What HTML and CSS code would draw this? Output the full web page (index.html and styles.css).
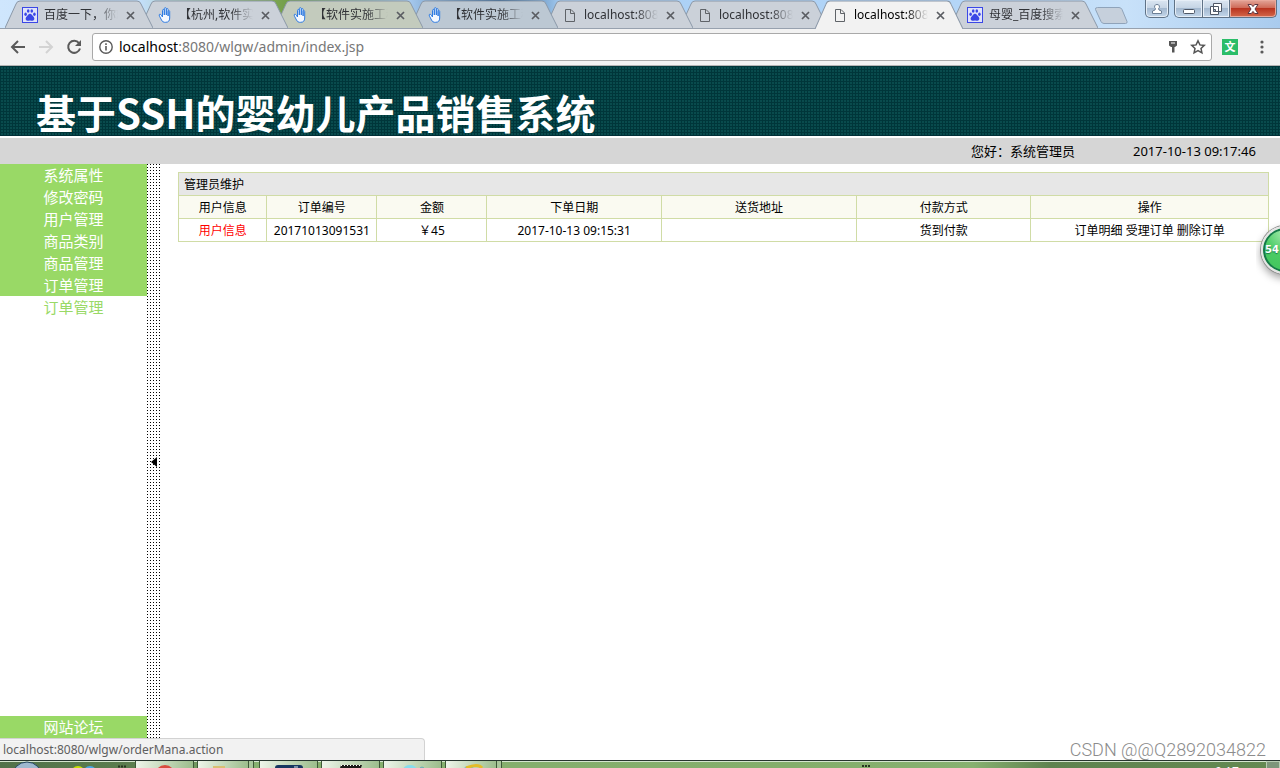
FILE: index.html
```html
<!DOCTYPE html>
<html lang="zh-CN">
<head>
<meta charset="utf-8">
<title>基于SSH的婴幼儿产品销售系统</title>
<link rel="stylesheet" href="styles.css">
</head>
<body>
<svg class="defs" aria-hidden="true">
  <symbol id="tab-shape" viewBox="0 0 148 28" preserveAspectRatio="none">
    <path d="M0 28 L11 4 Q12 1 15 1 H132 Q135 1 136 4 L148 28"/>
  </symbol>
  <symbol id="paw" viewBox="0 0 16 16">
    <rect x=".5" y=".5" width="15" height="15" fill="#dfe3fa" stroke="#3b48e6"/>
    <g fill="#3b48e6"><ellipse cx="3.6" cy="7.2" rx="1.3" ry="1.700"/><ellipse cx="6.2" cy="4" rx="1.3" ry="1.800"/><ellipse cx="9.8" cy="4" rx="1.3" ry="1.800"/><ellipse cx="12.4" cy="7.2" rx="1.3" ry="1.700"/><path d="M8 6.800c1.700 0 2 1.600 3.300 2.800 1.500 1.300 1.400 3.900-.6 4.200-1 .1-1.700-.3-2.700-.3s-1.700.4-2.700.3c-2-.3-2.100-2.900-.6-4.200C6 8.400 6.300 6.800 8 6.800z"/></g>
  </symbol>
  <symbol id="hand" viewBox="0 0 16 16">
    <path d="M5.500 9V3.500q0-1 .9-1t.9 1V8 1.700q0-1 1-1t1 1V8 2.500q0-1 .9-1t.9 1V9 4.500q0-.9.8-.9t.8.900V11q0 4.300-4 4.300H7.500Q5.500 15.300 4.500 13L2.500 9.200q-1-1.700.3-2 .8-.1 1.500 1L5.500 10z" fill="#f4f8ff" stroke="#2f7be0"/>
  </symbol>
  <symbol id="page" viewBox="0 0 16 16">
    <path d="M3.500 2.500h5.500l3.500 3.500v8.500h-9zM8.500 2.500v4h4" fill="none" stroke="currentColor"/>
  </symbol>
  <symbol id="cross" viewBox="0 0 9 9">
    <path d="M1 1l7 7M8 1L1 8" stroke="#5a5d62" stroke-width="1.700"/>
  </symbol>
</svg>

<div class="browser-top">
  <ul class="tabs">
    <li class="tab"><svg class="shape"><use href="#tab-shape"/></svg><svg class="favicon"><use href="#paw"/></svg><span class="tab-title">百度一下，你就</span><button class="close" aria-label="关闭"><svg><use href="#cross"/></svg></button></li>
    <li class="tab"><svg class="shape"><use href="#tab-shape"/></svg><svg class="favicon"><use href="#hand"/></svg><span class="tab-title">【杭州,软件实</span><button class="close" aria-label="关闭"><svg><use href="#cross"/></svg></button></li>
    <li class="tab green"><svg class="shape"><use href="#tab-shape"/></svg><svg class="favicon"><use href="#hand"/></svg><span class="tab-title">【软件实施工程</span><button class="close" aria-label="关闭"><svg><use href="#cross"/></svg></button></li>
    <li class="tab blue"><svg class="shape"><use href="#tab-shape"/></svg><svg class="favicon"><use href="#hand"/></svg><span class="tab-title">【软件实施工程</span><button class="close" aria-label="关闭"><svg><use href="#cross"/></svg></button></li>
    <li class="tab"><svg class="shape"><use href="#tab-shape"/></svg><svg class="favicon"><use href="#page"/></svg><span class="tab-title">localhost:8080</span><button class="close" aria-label="关闭"><svg><use href="#cross"/></svg></button></li>
    <li class="tab"><svg class="shape"><use href="#tab-shape"/></svg><svg class="favicon"><use href="#page"/></svg><span class="tab-title">localhost:8080</span><button class="close" aria-label="关闭"><svg><use href="#cross"/></svg></button></li>
    <li class="tab active"><svg class="shape"><use href="#tab-shape"/></svg><svg class="favicon"><use href="#page"/></svg><span class="tab-title">localhost:8080</span><button class="close" aria-label="关闭"><svg><use href="#cross"/></svg></button></li>
    <li class="tab"><svg class="shape"><use href="#tab-shape"/></svg><svg class="favicon"><use href="#paw"/></svg><span class="tab-title">母婴_百度搜索</span><button class="close" aria-label="关闭"><svg><use href="#cross"/></svg></button></li>
  </ul>
  <button class="new-tab" aria-label="新标签页"><svg viewBox="0 0 34 17"><path d="M3.500.5H25q2 0 3 2l5 12q.5 2-1.500 2H10q-2 0-3-2L1.500 2.500q-.5-2 2-2z" fill="#c6d0dc" stroke="#8fa3ba"/></svg></button>
  <div class="window-controls">
    <button class="win user" aria-label="用户"><svg viewBox="0 0 12 12"><path d="M6 1.500a2.200 2.200 0 0 1 1.500 4L8 7l2.500 1v2.500h-9V8L4 7l.5-1.500A2.200 2.200 0 0 1 6 1.500z" fill="#fff" stroke="#6c7f96"/></svg></button>
    <div class="win-group">
      <button class="win min" aria-label="最小化"><svg viewBox="0 0 12 12"><rect x=".5" y="6.500" width="11" height="4" rx="1" fill="#fff" stroke="#4e5766"/></svg></button>
      <button class="win max" aria-label="还原"><svg viewBox="0 0 12 12"><path d="M3.500.5h8v8h-8zM.5 3.500h8v8h-8z" fill="#fff" stroke="#4e5766"/><path d="M3.500 6.500h2v2h-2z" fill="#9fb4cc" stroke="#4e5766"/></svg></button>
      <button class="win quit" aria-label="关闭窗口"><svg viewBox="0 0 12 12"><path d="M1 1.500h3.300L6 3.600l1.700-2.100H11L8 6l3 4.500H7.700L6 8.400l-1.700 2.100H1L4 6z" fill="#fff" stroke="#5c3540"/></svg></button>
    </div>
  </div>
</div>

<div class="toolbar">
  <button class="nav" aria-label="后退"><svg viewBox="0 0 16 16"><path d="M15 8H2.500M8 2L2 8l6 6" fill="none" stroke="#5a5a5a" stroke-width="2"/></svg></button>
  <button class="nav" aria-label="前进" disabled><svg viewBox="0 0 16 16"><path d="M1 8h12.500M8 2l6 6-6 6" fill="none" stroke="#d3d3d3" stroke-width="2"/></svg></button>
  <button class="nav" aria-label="刷新"><svg viewBox="0 0 16 16"><path d="M13 4.200A6 6 0 1 0 14 9.500" fill="none" stroke="#5a5a5a" stroke-width="2"/><path d="M15 1v6H9z" fill="#5a5a5a"/></svg></button>
  <div class="address">
    <svg class="info" viewBox="0 0 14 14"><circle cx="7" cy="7" r="6.200" fill="none" stroke="#5a5a5a" stroke-width="1.400"/><path d="M7 6v4.500M7 3.300v1.600" stroke="#5a5a5a" stroke-width="1.600"/></svg>
    <p class="url">localhost<span>:8080/wlgw/admin/index.jsp</span></p>
    <button class="nav" aria-label="密码"><svg viewBox="0 0 16 16"><path d="M4 2h8v4.500L10 8H6L4 6.500z" fill="#555"/><path d="M6 4h4" stroke="#fff"/><path d="M7 8h2.500v5.500H7z" fill="#555"/></svg></button>
    <button class="nav" aria-label="收藏"><svg viewBox="0 0 16 16"><path d="M8 1.800l1.900 4.100 4.400.5-3.300 3 .9 4.400L8 11.600l-3.900 2.200.9-4.400-3.300-3 4.400-.5z" fill="none" stroke="#555" stroke-width="1.500"/></svg></button>
  </div>
  <button class="translate" aria-label="翻译">文</button>
  <button class="nav menu" aria-label="菜单"><svg viewBox="0 0 16 16" fill="#5a5a5a"><circle cx="8" cy="3" r="1.600"/><circle cx="8" cy="8" r="1.600"/><circle cx="8" cy="13" r="1.600"/></svg></button>
</div>

<header class="banner"><h1>基于SSH的婴幼儿产品销售系统</h1></header>
<div class="greeting"><span>您好<span class="colon">：</span>系统管理员</span><time>2017-10-13 09:17:46</time></div>

<div class="content">
  <nav class="sidebar">
    <a class="item" href="#">系统属性</a>
    <a class="item" href="#">修改密码</a>
    <a class="item" href="#">用户管理</a>
    <a class="item" href="#">商品类别</a>
    <a class="item" href="#">商品管理</a>
    <a class="item" href="#">订单管理</a>
    <a class="item sub" href="#">订单管理</a>
    <a class="item forum" href="#">网站论坛</a>
  </nav>
  <button class="splitter" aria-label="收起菜单"><svg viewBox="0 0 6 10"><path d="M6 0v10L0 5z"/></svg></button>
  <main class="main">
    <table class="orders">
      <colgroup><col class="col-user"><col class="col-short"><col class="col-short"><col class="col-mid"><col class="col-address"><col class="col-mid"><col></colgroup>
      <thead>
        <tr class="caption"><th colspan="7">管理员维护</th></tr>
        <tr class="head"><th>用户信息</th><th>订单编号</th><th>金额</th><th>下单日期</th><th>送货地址</th><th>付款方式</th><th>操作</th></tr>
      </thead>
      <tbody>
        <tr><td><a class="red" href="#">用户信息</a></td><td>20171013091531</td><td>￥45</td><td>2017-10-13 09:15:31</td><td></td><td>货到付款</td><td><a href="#">订单明细</a> <a href="#">受理订单</a> <a href="#">删除订单</a></td></tr>
      </tbody>
    </table>
  </main>
  <div class="ball-clip"><div class="ball">54</div></div>
  <div class="status">localhost:8080/wlgw/orderMana.action</div>
  <div class="watermark">CSDN @@Q2892034822</div>
</div>

<footer class="taskbar">
  <div class="quick">
    <svg viewBox="0 0 136 7"><circle cx="27" cy="16" r="15" fill="#9fb9cf" stroke="#24455f"/><circle cx="78" cy="12" r="7" fill="#c9e000"/><circle cx="90" cy="12" r="7" fill="#48a8e8"/><path d="M118 5.500h9" stroke="#27351f" stroke-width="2" stroke-dasharray="2 1"/></svg>
  </div>
  <button class="task" aria-label="Chrome"><svg viewBox="0 0 30 7"><circle cx="15" cy="14" r="10" fill="#d94c3f"/></svg></button>
  <button class="task stacked" aria-label="资源管理器"><svg viewBox="0 0 30 7"><path d="M5 5h12v2H5z" fill="#d9bf72"/></svg></button>
  <button class="task" aria-label="Eclipse"><svg viewBox="0 0 30 7"><path d="M1 7q0-3 3-3h22q3 0 3 3z" fill="#17365f"/><path d="M20 6h4" stroke="#dce8f2"/></svg></button>
  <button class="task" aria-label="命令行"><svg viewBox="0 0 30 7"><path d="M4 7l1-3h21l-1 3z" fill="#1c1a18"/><path d="M5 4.500h21" stroke="#fff" stroke-dasharray="1 2"/></svg></button>
  <button class="task" aria-label="工具"><svg viewBox="0 0 30 7"><ellipse cx="12" cy="9" rx="7" ry="5" fill="#86dded"/><path d="M22 7l2-1 2 1" stroke="#5caab8" fill="none"/></svg></button>
  <button class="task stacked last" aria-label="Internet Explorer"><svg viewBox="0 0 30 7"><circle cx="13" cy="12" r="7" fill="#63b6e8"/><path d="M10 7Q22 2 26 7" fill="none" stroke="#e4bc28" stroke-width="3"/></svg></button>
  <svg class="tray" viewBox="0 0 9 2"><path d="M0 1h9" stroke="#27351f" stroke-width="2" stroke-dasharray="2 1"/></svg>
  <time class="clock">9:17</time>
  <button class="desktop" aria-label="显示桌面"></button>
</footer>
</body>
</html>
```
FILE: styles.css
```css
* { box-sizing: border-box; }
body {
  margin: 0;
  height: 100vh;
  display: flex;
  flex-direction: column;
  overflow: hidden;
  background: #fff;
  color: #000;
  font: 12px/22px "Noto Sans", "Noto Sans CJK SC", sans-serif;
}
button { border: 0; padding: 0; margin: 0; background: none; font: inherit; display: grid; place-items: center; }
a { color: inherit; text-decoration: none; }
svg { display: block; }
.defs { display: none; }

/* tab strip */
.browser-top {
  flex: none;
  position: relative;
  display: flex;
  height: 29px;
  padding-left: 5px;
  border-bottom: 1px solid #97a1ae;
  background: linear-gradient(90deg, #cfe6fd 0, #c3dffa 11%, #86ad5c 20%, #6f9c45 23%, #a6c9ee 32%, #215585 39%, #a9cff5 44%, #b4d6f8 75%, #c8e1f9 88%, #a9cbee 100%);
}
.tabs { display: flex; margin: 0; padding: 0; list-style: none; }
.tab {
  position: relative;
  display: flex;
  align-items: center;
  width: 135px;
  height: 28px;
  padding: 2px 5px 0 17px;
  color: #303236;
  --fill: #cbd1d9;
}
.tab:nth-child(1) { z-index: 8; }
.tab:nth-child(2) { z-index: 7; }
.tab:nth-child(3) { z-index: 6; }
.tab:nth-child(4) { z-index: 5; }
.tab:nth-child(5) { z-index: 4; }
.tab:nth-child(6) { z-index: 3; }
.tab.green { --fill: #c3cbbd; }
.tab.blue { --fill: #bcc8d3; }
.tab.active { --fill: #f2f2f2; z-index: 9; height: 29px; padding-bottom: 1px; color: #000; }
.shape { position: absolute; left: 0; top: 0; width: 148px; height: 100%; fill: var(--fill); stroke: #8b98a8; }
.favicon { position: relative; flex: none; width: 16px; height: 16px; color: #5f6368; }
.tab-title {
  position: relative;
  flex: 1;
  overflow: hidden;
  margin: 0 8px 0 6px;
  white-space: nowrap;
  -webkit-mask-image: linear-gradient(90deg, #000 70%, transparent);
  mask-image: linear-gradient(90deg, #000 70%, transparent);
}
.close { position: relative; flex: none; width: 9px; height: 9px; }
.close svg { width: 9px; height: 9px; }
.new-tab { width: 34px; margin-left: 9px; padding-top: 2px; }
.new-tab svg { width: 34px; height: 17px; }
.window-controls { display: flex; gap: 5px; margin-left: auto; padding-right: 3px; height: 18px; }
.win {
  height: 18px;
  border: 1px solid #5f7286;
  border-top: 0;
  background: linear-gradient(#dbe6f2 0, #c6d5e5 45%, #a4b9d0 50%, #c2d6ea 100%);
  box-shadow: inset 0 0 0 1px #e6eef7;
}
.win svg { width: 12px; height: 12px; }
.user { width: 24px; border-radius: 0 0 5px 5px; }
.win-group { display: flex; }
.min { width: 29px; border-radius: 0 0 0 5px; }
.max { width: 27px; border-left: 0; }
.quit { width: 47px; border-left: 0; border-radius: 0 0 5px 0; background: linear-gradient(#e3a699 0, #cf6b59 45%, #b93420 50%, #d4684a 100%); box-shadow: inset 0 0 0 1px #e9a99c; }

/* toolbar */
.toolbar {
  flex: none;
  display: flex;
  align-items: center;
  gap: 12px;
  height: 37px;
  padding: 0 10px;
  border-bottom: 1px solid #b4b4b4;
  background: #f2f2f2;
}
.nav, .nav svg { width: 16px; height: 16px; flex: none; }
.address {
  flex: 1;
  display: flex;
  align-items: center;
  gap: 9px;
  height: 28px;
  margin-left: -2px;
  padding: 0 5px 0 6px;
  border: 1px solid #a9a9a9;
  border-radius: 3px;
  background: #fff;
}
.info { width: 14px; height: 14px; }
.url { flex: 1; margin: 0 0 0 -3px; font-size: 14px; }
.url span { color: #777; }
.translate { width: 16px; height: 16px; margin-left: -2px; background: #2bbd69; color: #fff; font-size: 11px; font-weight: 700; line-height: 16px; }
.menu { margin-left: 4px; }

/* site banner */
.banner {
  flex: none;
  height: 70px;
  padding: 18px 36px 0;
  overflow: hidden;
  border-bottom: 1px solid #003038;
  background: linear-gradient(#00363a 1px, #00363a80 1px) 0 0 / 3px 3px, linear-gradient(90deg, #00363a 1px, #126060 1px) 0 0 / 3px 3px;
}
.banner h1 { margin: 0; color: #fff; font: 700 40px/56px "Noto Sans CJK SC", sans-serif; white-space: nowrap; }
.greeting {
  flex: none;
  display: flex;
  justify-content: flex-end;
  gap: 58px;
  height: 28px;
  padding: 2px 19px 0 0;
  border-top: 2px solid #fff;
  background: #d6d6d6;
  font-size: 13px;
}
.greeting time { width: 128px; }
.colon { font-family: "Noto Sans CJK TC", sans-serif; }

/* page body */
.content { flex: 1; position: relative; display: flex; min-height: 0; }
.sidebar { flex: none; display: flex; flex-direction: column; width: 147px; }
.item { background: #99d966; color: #fff; font-size: 15px; line-height: 22px; text-align: center; }
.sub { background: #fff; color: #99d966; }
.forum { margin-top: auto; padding-bottom: 22px; }
.splitter {
  flex: none;
  width: 13px;
  background: conic-gradient(from 0deg at 1px 1px, #fff 75%, #000 0) 0 0 / 3px 3px;
}
.splitter svg { width: 6px; height: 10px; }
.main { flex: 1; padding: 8px 11px 0 18px; }
.orders { width: 100%; table-layout: fixed; border-collapse: collapse; }
.orders th, .orders td { height: 23px; padding: 2px 0 0; border: 1px solid #d0dca6; font-weight: 400; text-align: center; line-height: 20px; }
.orders .caption th { padding-left: 5px; background: #e7e7e7; text-align: left; }
.head { background: #fafaf1; }
.red { color: #f00; }
.col-user { width: 8.1%; }
.col-short { width: 10.1%; }
.col-mid { width: 16%; }
.col-address { width: 17.9%; }

/* overlays */
.ball-clip { position: absolute; right: 0; top: 56px; width: 24px; height: 68px; overflow: hidden; }
.ball {
  width: 48px;
  height: 48px;
  margin: 6px 0 0 5px;
  padding-left: 2px;
  border: 2px solid #e4e4e4;
  border-radius: 50%;
  background: radial-gradient(circle at 50% 10%, #a8ecb0, #4ccc66 45%, #3fc45a);
  box-shadow: inset 0 0 0 2px #16794a, 0 0 0 1px #8f8f8f, 0 4px 8px #0006;
  color: #fff;
  font: 700 10px/44px "DejaVu Sans", sans-serif;
  text-shadow: 0 1px 1px #16794a;
}
.status {
  position: absolute;
  left: 0;
  bottom: 0;
  width: 425px;
  height: 22px;
  padding-left: 3px;
  border: solid #d2d2d2;
  border-width: 1px 1px 0 0;
  border-radius: 0 4px 0 0;
  background: #f2f2f2;
  color: #5f5f5f;
}
.watermark { position: absolute; right: 14px; bottom: 0; color: #8c8c8c; font: 300 18px/20px Roboto, sans-serif; }

/* taskbar */
.taskbar {
  flex: none;
  display: flex;
  height: 8px;
  overflow: hidden;
  border-top: 1px solid #26352e;
  background: linear-gradient(#d5e6cf 1px, transparent 1px), linear-gradient(90deg, #52724a 0, #5b7d4e 10%, #86b06f 20%, #84ae6b 62%, #87b170 76%, #5f834f 82%, #648a52 100%);
}
.quick { width: 135px; }
.quick svg { width: 136px; height: 7px; }
.task {
  width: 59px;
  height: 7px;
  margin-right: 3px;
  border: solid #3e5937;
  border-width: 0 1px;
  background: linear-gradient(100deg, #eef5ea, #9bbd8b);
}
.task svg { width: 30px; height: 7px; }
.stacked { width: 52px; margin-right: 10px; box-shadow: 4px 0 0 #a9c79b, 5px 0 0 #3e5937; }
.tray { width: 9px; height: 2px; margin: 4px 0 0 auto; }
.clock { width: 28px; margin: 4px 0 0 344px; color: #fff; line-height: 14px; }
.desktop { width: 14px; height: 7px; margin-left: 23px; border: 1px solid #b8cdb3; border-bottom: 0; background: #7d967a; }
```
